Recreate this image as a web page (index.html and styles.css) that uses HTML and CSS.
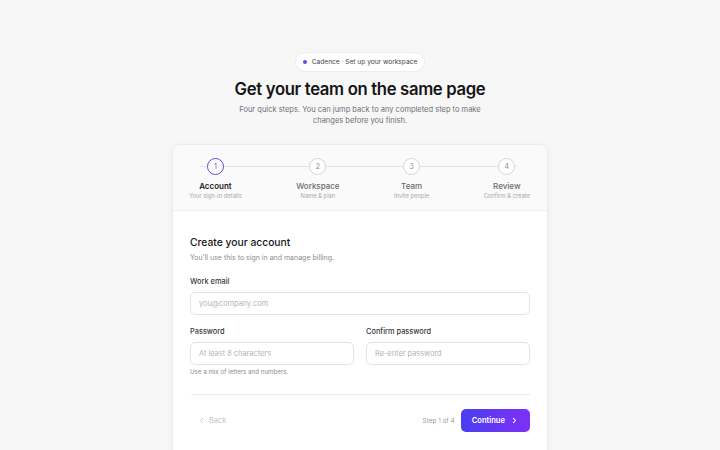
FILE: index.html
```html
<!DOCTYPE html>
<html lang="en">
<head>
    <meta charset="UTF-8">
    <meta name="viewport" content="width=device-width, initial-scale=1.0">
    <title>Cadence · Set up your workspace</title>
    <link rel="stylesheet" href="styles.css">
</head>
<body>
    <div class="page">
        <div class="badge"><span class="badge-dot"></span>Cadence · Set up your workspace</div>
        <h1 class="title">Get your team on the same page</h1>
        <p class="lead">Four quick steps. You can jump back to any completed step to make<br>changes before you finish.</p>

        <div class="card">
            <div class="stepper">
                <div class="stepper-line"></div>
                <div class="step active">
                    <div class="step-num">1</div>
                    <div class="step-name">Account</div>
                    <div class="step-sub">Your sign-in details</div>
                </div>
                <div class="step">
                    <div class="step-num">2</div>
                    <div class="step-name">Workspace</div>
                    <div class="step-sub">Name &amp; plan</div>
                </div>
                <div class="step">
                    <div class="step-num">3</div>
                    <div class="step-name">Team</div>
                    <div class="step-sub">Invite people</div>
                </div>
                <div class="step">
                    <div class="step-num">4</div>
                    <div class="step-name">Review</div>
                    <div class="step-sub">Confirm &amp; create</div>
                </div>
            </div>

            <div class="card-body">
                <h2 class="form-title">Create your account</h2>
                <p class="form-sub">You'll use this to sign in and manage billing.</p>

                <label class="field-label" for="email">Work email</label>
                <input id="email" class="field" type="email" placeholder="you@company.com">

                <div class="row">
                    <div class="col">
                        <label class="field-label" for="password">Password</label>
                        <input id="password" class="field" type="password" placeholder="At least 8 characters">
                        <div class="hint">Use a mix of letters and numbers.</div>
                    </div>
                    <div class="col">
                        <label class="field-label" for="confirm">Confirm password</label>
                        <input id="confirm" class="field" type="password" placeholder="Re-enter password">
                    </div>
                </div>

                <div class="divider"></div>

                <div class="footer">
                    <button class="back-btn" disabled>
                        <svg width="7" height="7" viewBox="0 0 10 10"><path d="M6.5 2 3.5 5l3 3" fill="none" stroke="currentColor" stroke-width="1.3" stroke-linecap="round" stroke-linejoin="round"/></svg>
                        Back
                    </button>
                    <div class="footer-right">
                        <span class="step-count">Step 1 of 4</span>
                        <button class="next-btn">
                            Continue
                            <svg width="7" height="7" viewBox="0 0 10 10"><path d="M3.5 2 6.5 5l-3 3" fill="none" stroke="currentColor" stroke-width="1.5" stroke-linecap="round" stroke-linejoin="round"/></svg>
                        </button>
                    </div>
                </div>
            </div>
        </div>
    </div>
</body>
</html>
```

FILE: styles.css
```css
* {
    box-sizing: border-box;
}

body {
    margin: 0;
    background-color: #f7f7f8;
    color: #1a1a1a;
    font-family: 'Inter', 'Noto Sans', sans-serif;
    overflow: hidden;
}

.page {
    display: flex;
    flex-direction: column;
    align-items: center;
    padding-top: 52px;
}

.badge {
    display: flex;
    align-items: center;
    gap: 5px;
    height: 20px;
    padding: 0 7px 0 7px;
    background-color: #fff;
    border: 1px solid #ececee;
    border-radius: 999px;
    font-size: 6.6px;
    color: #444;
}

.badge-dot {
    width: 4px;
    height: 4px;
    border-radius: 50%;
    background-color: #5b4ae6;
}

.title {
    margin: 6px 0 0;
    font-size: 16.7px;
    line-height: 22px;
    font-weight: 600;
    letter-spacing: -0.02em;
    color: #151515;
}

.lead {
    margin: 4px 0 0;
    font-size: 7.5px;
    line-height: 11px;
    color: #6e6e72;
    text-align: center;
}

.card {
    width: 376px;
    margin-top: 18px;
    background-color: #fff;
    border: 1px solid #ebebed;
    border-radius: 9px;
    box-shadow: 0 2px 10px rgba(0, 0, 0, 0.04);
    overflow: hidden;
}

/* stepper */
.stepper {
    position: relative;
    display: flex;
    justify-content: space-between;
    height: 66px;
    padding: 13px 17px 0 16px;
    background-color: #fafafa;
    border-bottom: 1px solid #efeff1;
}

.stepper-line {
    position: absolute;
    left: 27px;
    right: 30px;
    top: 21px;
    height: 1px;
    background-color: #e3e3e6;
}

.step {
    position: relative;
    display: flex;
    flex-direction: column;
    align-items: center;
}

.step-num {
    display: flex;
    align-items: center;
    justify-content: center;
    width: 17px;
    height: 17px;
    border: 1px solid #d5d5d8;
    border-radius: 50%;
    background-color: #fff;
    font-size: 7px;
    color: #8a8a8e;
}

.step-name {
    margin-top: 6px;
    font-size: 8px;
    line-height: 10px;
    font-weight: 500;
    color: #6b6b70;
}

.step-sub {
    margin-top: 0;
    font-size: 5.8px;
    line-height: 9px;
    color: #a9a9ad;
}

.step.active .step-num {
    border: 1.5px solid #5b4ae6;
    color: #5b4ae6;
}

.step.active .step-name {
    font-weight: 600;
    color: #1a1a1a;
}

/* form */
.card-body {
    padding: 24px 17px 30px;
}

.form-title {
    margin: 0;
    font-size: 10.3px;
    line-height: 14px;
    font-weight: 500;
    color: #161616;
}

.form-sub {
    margin: 4px 0 0;
    font-size: 7px;
    line-height: 10px;
    color: #8b8b90;
}

.field-label {
    display: block;
    margin: 14px 0 5px;
    font-size: 7.4px;
    line-height: 10px;
    font-weight: 500;
    color: #38383c;
}

.field {
    display: block;
    width: 100%;
    height: 23px;
    padding: 0 8px;
    border: 1px solid #e4e4e7;
    border-radius: 5px;
    background-color: #fff;
    font-family: inherit;
    font-size: 7.4px;
    color: #222;
    outline: none;
}

.field::placeholder {
    color: #b3b3b7;
}

.row {
    display: grid;
    grid-template-columns: 1fr 1fr;
    gap: 12px;
}

.row .field-label {
    margin-top: 12px;
}

.hint {
    margin-top: 3px;
    font-size: 6.2px;
    line-height: 8px;
    color: #8b8b90;
}

.divider {
    height: 1px;
    margin: 18px 0 0 1px;
    background-color: #ececee;
}

.footer {
    display: flex;
    justify-content: space-between;
    align-items: center;
    margin-top: 14px;
}

.back-btn {
    display: flex;
    align-items: center;
    gap: 4px;
    padding: 0 0 0 8px;
    border: none;
    background: none;
    font-family: inherit;
    font-size: 7.4px;
    color: #c2c2c6;
}

.footer-right {
    display: flex;
    align-items: center;
    gap: 6px;
}

.step-count {
    font-size: 6.4px;
    color: #9a9a9e;
}

.next-btn {
    display: flex;
    align-items: center;
    gap: 6px;
    height: 23px;
    padding: 0 12px 0 11px;
    border: none;
    border-radius: 5px;
    background: linear-gradient(90deg, #4b3ef0, #7f2ff6);
    font-family: inherit;
    font-size: 7.6px;
    font-weight: 600;
    color: #fff;
}
```
